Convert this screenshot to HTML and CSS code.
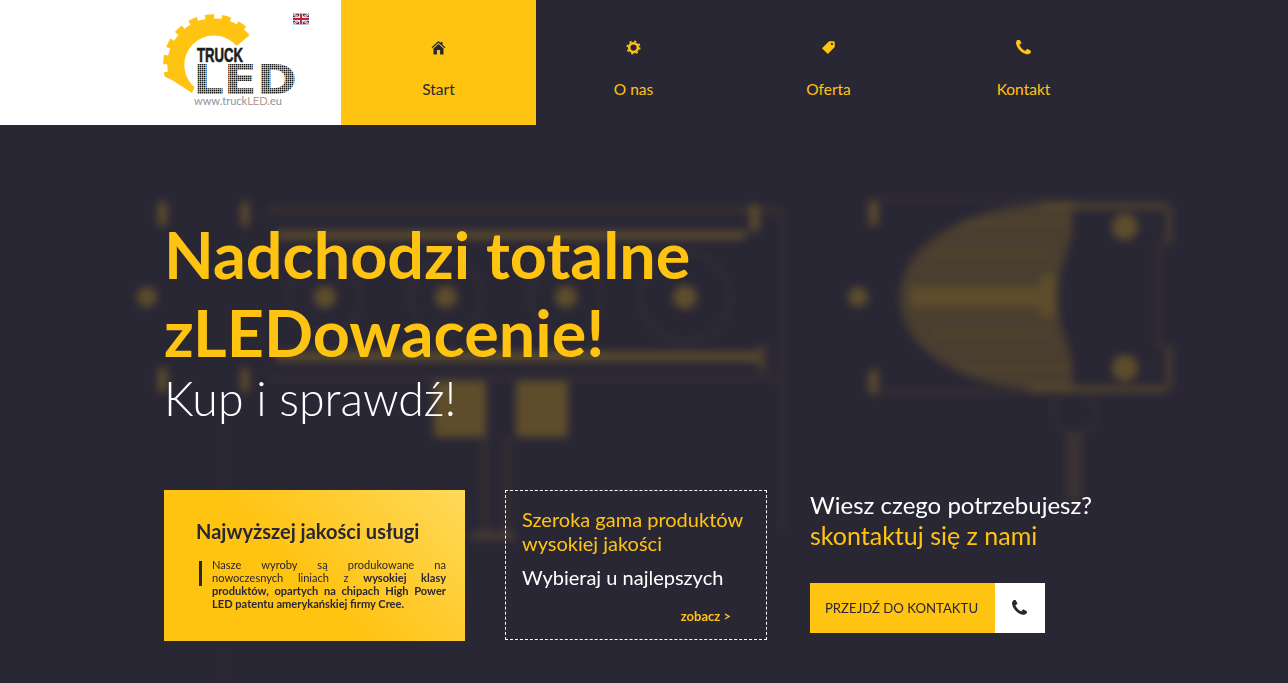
FILE: index.html
```html
<!DOCTYPE html>
<html lang="pl">
<head>
  <meta charset="utf-8">
  <title>TruckLED</title>
  <link rel="stylesheet" href="styles.css">
</head>
<body>
  <svg class="backdrop" viewBox="0 0 1288 683" aria-hidden="true">
    <g class="backdrop-art">
      <!-- left lamp -->
      <rect x="158" y="202" width="9" height="24"/>
      <rect x="241" y="202" width="8" height="24"/>
      <rect x="267" y="208" width="513" height="4" opacity=".45"/>
      <rect x="750" y="205" width="9" height="26"/>
      <rect x="276" y="231" width="470" height="8"/>
      <circle cx="147" cy="297" r="10"/>
      <circle cx="325" cy="297" r="11"/>
      <circle cx="446" cy="297" r="11"/>
      <circle cx="566" cy="297" r="11"/>
      <circle cx="685" cy="297" r="12"/>
      <circle cx="325" cy="297" r="36" class="backdrop-ring"/>
      <circle cx="446" cy="297" r="36" class="backdrop-ring"/>
      <circle cx="566" cy="297" r="36" class="backdrop-ring"/>
      <circle cx="685" cy="297" r="45" class="backdrop-ring"/>
      <rect x="276" y="352" width="482" height="9"/>
      <rect x="758" y="345" width="8" height="26" opacity=".6"/>
      <rect x="158" y="368" width="9" height="24"/>
      <rect x="241" y="368" width="8" height="24"/>
      <rect x="267" y="376" width="513" height="4" opacity=".2"/>
      <rect x="434" y="381" width="52" height="56"/>
      <rect x="516" y="381" width="52" height="56"/>
      <rect x="222" y="400" width="4" height="283" opacity=".12"/>
      <rect x="482" y="437" width="5" height="100" opacity=".3"/>
      <rect x="504" y="437" width="5" height="100" opacity=".3"/>
      <rect x="470" y="533" width="45" height="6" opacity=".7"/>
      <rect x="780" y="210" width="5" height="320" opacity=".2"/>
      <!-- right lamp -->
      <rect x="869" y="201" width="9" height="24"/>
      <rect x="872" y="198" width="180" height="2" opacity=".35"/>
      <rect x="872" y="390" width="180" height="3" opacity=".35"/>
      <circle cx="858" cy="297" r="10"/>
      <rect x="869" y="370" width="9" height="24"/>
      <path class="backdrop-dome" d="M1073 201 Q960 204 915 255 Q885 297 915 340 Q960 392 1073 392 L1072 360 L1060 320 L1058 297 L1060 275 L1072 235Z"/>
      <rect x="910" y="287" width="145" height="20"/>
      <rect x="1040" y="275" width="15" height="42" />
      <rect x="930" y="250" width="120" height="8" opacity=".35"/>
      <rect x="930" y="330" width="120" height="8" opacity=".35"/>
      <rect x="960" y="220" width="110" height="6" opacity=".35"/>
      <rect x="960" y="365" width="110" height="6" opacity=".35"/>
      <rect x="1040" y="203" width="125" height="6" opacity=".8"/>
      <rect x="1030" y="386" width="135" height="6" opacity=".8"/>
      <rect x="1166" y="205" width="6" height="40" opacity=".6"/>
      <rect x="1166" y="345" width="6" height="45" opacity=".6"/>
      <rect x="1155" y="240" width="6" height="110" opacity=".2"/>
      <circle cx="1125" cy="227" r="13"/>
      <circle cx="1125" cy="368" r="13"/>
      <circle cx="1075" cy="412" r="22" class="backdrop-ring"/>
      <rect x="1066" y="432" width="17" height="70" opacity=".3"/>
    </g>
  </svg>

  <header class="topbar">
    <div class="brand">
      <svg class="logo" viewBox="0 0 150 100" role="img" aria-label="TruckLED">
        <defs>
          <pattern id="dots" width="2" height="2" patternUnits="userSpaceOnUse">
            <rect width="1.5" height="1.5" fill="#1c1c1c"/>
          </pattern>
          <clipPath id="gear-cut">
            <polygon points="-5,-5 85,-5 85,28 45,40 28,79 8,66 -5,60"/>
          </clipPath>
        </defs>
        <g clip-path="url(#gear-cut)">
          <path class="logo-gear-body" d="M79.100 26.600 A38 38 0 1 0 28.200 82.100"/>
          <path class="logo-gear-teeth" d="M80.500 14.600 A47.500 47.500 0 1 0 20.800 88.400"/>
        </g>
        <text class="logo-truck" x="33" y="47.500" textLength="46" lengthAdjust="spacingAndGlyphs">TRUCK</text>
        <text class="logo-led" x="29" y="80" textLength="104" lengthAdjust="spacingAndGlyphs">LED</text>
        <text class="logo-url" x="30" y="91">www.truck<tspan class="logo-url-led">LED</tspan>.eu</text>
      </svg>
      <svg class="flag" viewBox="0 0 60 40" role="img" aria-label="English">
        <rect width="60" height="40" fill="#2a3a7c"/>
        <path d="M0 0L60 40M60 0L0 40" stroke="#fff" stroke-width="8"/>
        <path d="M0 0L60 40M60 0L0 40" stroke="#c8202f" stroke-width="3"/>
        <path d="M30 0V40M0 20H60" stroke="#fff" stroke-width="13"/>
        <path d="M30 0V40M0 20H60" stroke="#c8202f" stroke-width="7"/>
      </svg>
    </div>
    <nav class="menu">
      <a class="menu-item active" href="#">
        <svg class="menu-icon" viewBox="0 0 24 24"><path d="M12 1.500 L15.500 4.700 V3 H18.500 V7.500 L23 11.700 L21.800 13.100 L12 4.300 L2.200 13.100 L1 11.700Z M12 6.500 L20 13.500 V23 H14.500 V16 H9.500 V23 H4 V13.500Z"/></svg>
        <span>Start</span>
      </a>
      <a class="menu-item" href="#">
        <svg class="menu-icon" viewBox="0 0 24 24"><circle class="gear-ring" cx="12" cy="12" r="7"/><circle class="gear-teeth" cx="12" cy="12" r="10"/></svg>
        <span>O nas</span>
      </a>
      <a class="menu-item" href="#">
        <svg class="menu-icon" viewBox="0 0 24 24"><path fill-rule="evenodd" d="M13 2 H20 Q22 2 22 4 V11 L11 22.500 L1.500 13Z M17.500 4.500 A1.800 1.800 0 1 0 17.510 4.500Z"/></svg>
        <span>Oferta</span>
      </a>
      <a class="menu-item" href="#">
        <svg class="menu-icon" viewBox="192 192 1408 1408"><path d="M1600 1240q0 27-10 70.500t-21 68.500q-21 50-122 106-94 51-186 51-27 0-53-3.500t-57.500-12.500-47-14.500-55.500-20.500-49-18q-98-35-175-83-127-79-264-216t-216-264q-48-77-83-175-3-9-18-49t-20.500-55.500-14.500-47-12.500-57.500-3.500-53q0-92 51-186 56-101 106-122 25-11 68.500-21t70.500-10q14 0 21 3 18 6 53 76 11 19 30 54t35 63.500 31 53.500q3 4 17.500 25t21.500 35.500 7 28.500q0 20-28.500 50t-62 55-62 53-28.500 46q0 9 5 22.500t8.500 20.500 14 24 11.500 19q76 137 174 235t235 174q2 1 19 11.500t24 14 20.500 8.500 22.500 5q18 0 46-28.500t53-62 55-62 50-28.500q14 0 28.500 7t35.500 21.500 25 17.500q25 15 53.500 31t63.500 35 54 30q70 35 76 53 3 7 3 21z"/></svg>
        <span>Kontakt</span>
      </a>
    </nav>
  </header>

  <main class="hero">
    <h1 class="hero-title">Nadchodzi totalne<br>zLEDowacenie!</h1>
    <p class="hero-sub">Kup i sprawdź!</p>

    <section class="boxes">
      <div class="box-quality">
        <h2>Najwyższej jakości usługi</h2>
        <div class="quality-text">
          <p>Nasze wyroby są produkowane na nowoczesnych liniach z <b>wysokiej klasy produktów, opartych na chipach High Power LED patentu amerykańskiej firmy Cree.</b></p>
        </div>
      </div>
      <div class="box-range">
        <h3>Szeroka gama produktów wysokiej jakości</h3>
        <p>Wybieraj u najlepszych</p>
        <a class="more" href="#">zobacz &gt;</a>
      </div>
      <div class="box-contact">
        <h3>Wiesz czego potrzebujesz?<br><span>skontaktuj się z nami</span></h3>
        <a class="contact-btn" href="#">
          <span class="contact-label">PRZEJDŹ DO KONTAKTU</span>
          <span class="contact-icon">
            <svg viewBox="192 192 1408 1408"><path d="M1600 1240q0 27-10 70.500t-21 68.500q-21 50-122 106-94 51-186 51-27 0-53-3.500t-57.500-12.500-47-14.500-55.500-20.500-49-18q-98-35-175-83-127-79-264-216t-216-264q-48-77-83-175-3-9-18-49t-20.500-55.500-14.500-47-12.500-57.500-3.500-53q0-92 51-186 56-101 106-122 25-11 68.500-21t70.500-10q14 0 21 3 18 6 53 76 11 19 30 54t35 63.500 31 53.500q3 4 17.500 25t21.500 35.500 7 28.500q0 20-28.500 50t-62 55-62 53-28.500 46q0 9 5 22.500t8.500 20.500 14 24 11.500 19q76 137 174 235t235 174q2 1 19 11.500t24 14 20.500 8.500 22.500 5q18 0 46-28.500t53-62 55-62 50-28.500q14 0 28.500 7t35.500 21.500 25 17.500q25 15 53.500 31t63.500 35 54 30q70 35 76 53 3 7 3 21z"/></svg>
          </span>
        </a>
      </div>
    </section>
  </main>
</body>
</html>
```

FILE: styles.css
```css
* {
  box-sizing: border-box;
}

html, body {
  height: 100%;
}

body {
  margin: 0;
  overflow: hidden;
  background-color: #2a2735;
  color: #fff;
  font-family: Lato, "Open Sans", sans-serif;
}

a {
  text-decoration: none;
  color: inherit;
}

/* blurred lamps behind the hero */
.backdrop {
  position: absolute;
  top: 0;
  left: 0;
  width: 1288px;
  height: 683px;
}

.backdrop-art {
  fill: #ffc312;
  opacity: .25;
  filter: blur(4px);
}

.backdrop-ring {
  fill: none;
  stroke: #ffc312;
  stroke-width: 5;
  opacity: .15;
}

.backdrop-dome {
  opacity: .6;
}

.topbar {
  position: relative;
  display: flex;
  height: 125px;
}

.brand {
  position: relative;
  width: 341px;
  background-color: #fff;
}

.logo {
  position: absolute;
  top: 14px;
  left: 164px;
  width: 150px;
  height: 100px;
  overflow: visible;
}

.logo-gear-body {
  fill: none;
  stroke: #ffc312;
  stroke-width: 17;
}

.logo-gear-teeth {
  fill: none;
  stroke: #ffc312;
  stroke-width: 5;
  stroke-dasharray: 9 7.6;
}

.logo-truck {
  font: 700 20px "Liberation Sans", sans-serif;
  fill: #1c1c1c;
  stroke: #1c1c1c;
  stroke-width: .6;
}

.logo-led {
  font: 700 41px "DejaVu Sans", sans-serif;
  fill: url(#dots);
}

.logo-url {
  font: 400 11px Lato, sans-serif;
  fill: #8b93a3;
}

.logo-url-led {
  fill: #b99a8c;
}

.flag {
  position: absolute;
  top: 13px;
  left: 293px;
  width: 16px;
  height: 12px;
}

.menu {
  display: flex;
}

.menu-item {
  display: flex;
  flex-direction: column;
  align-items: center;
  width: 195px;
  padding-top: 40px;
  color: #ffc312;
  font-size: 15.5px;
}

.menu-item span {
  margin-top: 25px;
}

.menu-item.active {
  background-color: #ffc312;
  color: #2a2735;
}

.menu-icon {
  width: 15px;
  height: 15px;
  fill: currentColor;
}

.gear-ring {
  fill: none;
  stroke: currentColor;
  stroke-width: 4;
}

.gear-teeth {
  fill: none;
  stroke: currentColor;
  stroke-width: 2.500;
  stroke-dasharray: 3.5 4.35;
}

.hero {
  position: relative;
  padding: 90px 0 0 164px;
}

.hero-title {
  margin: 0;
  color: #ffc312;
  font-size: 64.7px;
  font-weight: 700;
  line-height: 78px;
}

.hero-sub {
  margin: -2px 0 0;
  font-size: 46.5px;
  font-weight: 300;
  line-height: 58px;
}

.boxes {
  display: flex;
  align-items: flex-start;
  margin-top: 63px;
}

.box-quality {
  width: 301px;
  height: 151px;
  margin-right: 40px;
  padding: 28px 19px 0 32px;
  background: linear-gradient(45deg, #ffc312 45%, #ffd95a 100%);
  color: #2a2735;
}

.box-quality h2 {
  margin: 0 0 14px;
  font-size: 20px;
  font-weight: 700;
  line-height: 26px;
}

.quality-text {
  display: flex;
  gap: 10px;
  padding-left: 3px;
}

.quality-text::before {
  content: "";
  flex: none;
  width: 3px;
  height: 25px;
  margin-top: 3px;
  background-color: #2a2735;
}

.quality-text p {
  margin: 0;
  font-size: 11.1px;
  line-height: 13px;
  text-align: justify;
}

.box-range {
  display: flex;
  flex-direction: column;
  width: 262px;
  height: 150px;
  margin-right: 43px;
  padding: 16px 16px 0;
  border: 1px dashed #fff;
}

.box-range h3 {
  margin: 0;
  color: #ffc312;
  font-size: 20px;
  font-weight: 400;
  line-height: 24px;
}

.box-range p {
  margin: 10px 0 0;
  font-size: 20px;
  line-height: 24px;
}

.more {
  align-self: flex-end;
  margin: 19px 19px 0 0;
  color: #ffc312;
  font-size: 13px;
  font-weight: 700;
}

.box-contact h3 {
  margin: -1px 0 0;
  font-size: 24px;
  font-weight: 400;
  line-height: 31px;
}

.box-contact h3 span {
  color: #ffc312;
  font-size: 25px;
}

.contact-btn {
  display: flex;
  width: 235px;
  height: 50px;
  margin-top: 32px;
}

.contact-label {
  display: flex;
  flex: 1;
  align-items: center;
  justify-content: center;
  padding-right: 2px;
  background-color: #ffc312;
  color: #2a2735;
  font-size: 13.2px;
}

.contact-icon {
  display: flex;
  align-items: center;
  justify-content: center;
  width: 50px;
  padding-right: 2px;
  background-color: #fff;
}

.contact-icon svg {
  width: 15px;
  height: 16px;
  fill: #2a2735;
}
```
